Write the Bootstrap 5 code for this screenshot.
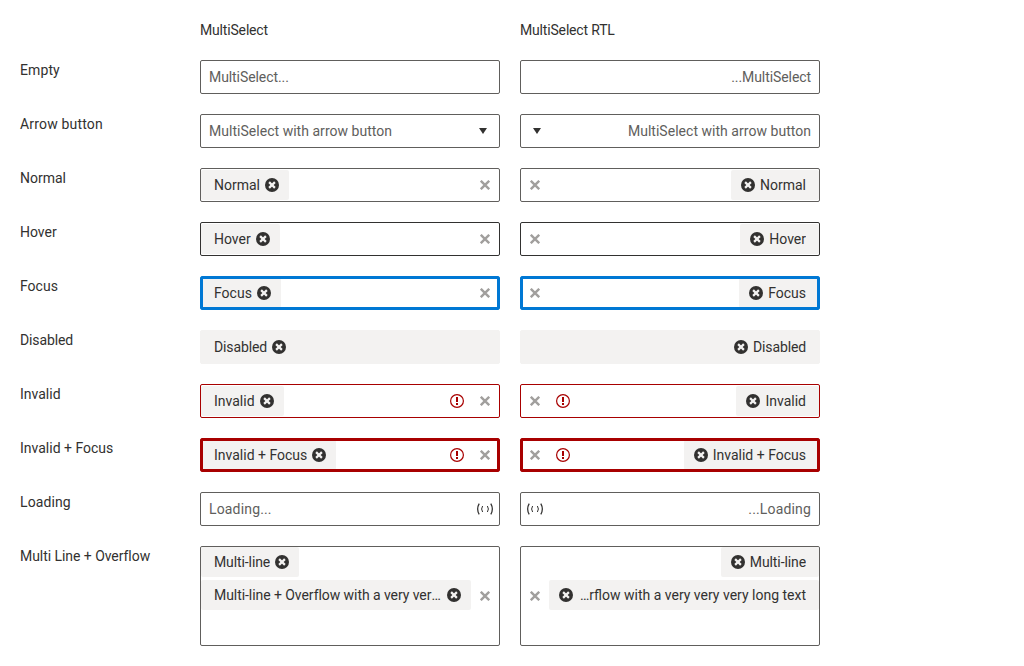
<!DOCTYPE html>
<html lang="en">
<head>
<meta charset="utf-8">
<meta name="viewport" content="width=device-width, initial-scale=1">
<title>MultiSelect</title>
<link href="https://cdn.jsdelivr.net/npm/bootstrap@5.3.0/dist/css/bootstrap.min.css" rel="stylesheet">
<style>
  body { font: 14px/20px Roboto, sans-serif; color: #323130; background: #fff; }
  .states { grid-template-columns: 160px 300px 300px; gap: 20px; padding: 20px; }
  .ms { height: 34px; border: 1px solid #605e5c; border-radius: 2px; background: #fff; }
  .ms.is-tall { height: 100px; }
  .ms.is-hover { border-color: #323130; }
  .ms.is-focus { border-color: #0078d4; }
  .ms.is-bad { border-color: #a80000; }
  .ms.is-off { border-color: #f3f2f1; background: #f3f2f1; }
  .ms.is-focus::after, .ms.is-ring::after { content: ""; position: absolute; inset: 0; border: 2px solid #0078d4; }
  .ms.is-ring::after { border-color: #a80000; }
  .hint { color: #605e5c; padding-inline: 8px; }
  .chips { gap: 3px; min-width: 0; }
  .is-tall .chips { align-self: flex-start; }
  .chip { height: 30px; max-width: 100%; background: #f3f2f1; border-radius: 2px; padding-inline: 13px 10px; gap: 5px; }
  .slot { width: 28px; }
  .slot-arrow { width: 32px; }
  svg { display: block; flex: none; }
</style>
</head>
<body>
<svg width="0" height="0" class="position-absolute" aria-hidden="true">
  <symbol id="remove" viewBox="0 0 14 14"><circle cx="7" cy="7" r="7" fill="#323130"/><path d="M4.1 4.1l5.8 5.8M9.9 4.1l-5.8 5.8" stroke="#f3f2f1" stroke-width="2.2"/></symbol>
  <symbol id="clear" viewBox="0 0 10 10"><path d="M.8.8l8.4 8.4M9.2.8L.8 9.2" stroke="#a19f9d" stroke-width="2.4"/></symbol>
  <symbol id="alert" viewBox="0 0 14 14"><circle cx="7" cy="7" r="6.4" fill="none" stroke="#a80000" stroke-width="1.2"/><path d="M6 3h2v5H6zM6 9h2v2H6z" fill="#a80000"/></symbol>
  <symbol id="arrow" viewBox="0 0 8 6"><path d="M0 0h8L4 6z" fill="#323130"/></symbol>
  <symbol id="busy" viewBox="0 0 18 12"><path d="M3.2.6Q.1 6 3.2 11.4M14.8.6Q17.9 6 14.8 11.4" fill="none" stroke="#323130" stroke-width="1.25"/><path d="M6.6 3Q4.6 6 6.6 9M11.4 3Q13.4 6 11.4 9" fill="none" stroke="#323130" stroke-width="1"/></symbol>
</svg>
<main class="states d-grid" id="states"></main>
<script src="https://cdn.jsdelivr.net/npm/bootstrap@5.3.0/dist/js/bootstrap.bundle.min.js"></script>
<script>
  const icon = (id, w, h) => `<svg width="${w}" height="${h}" aria-hidden="true"><use href="#${id}"/></svg>`;
  const icons = { clear: icon('clear', 10, 10), alert: icon('alert', 14, 14), arrow: icon('arrow', 8, 6), busy: icon('busy', 18, 12) };
  // letter spacing in px
  const tracking = {
    'MultiSelect': -.17, 'MultiSelect RTL': -.17, 'MultiSelect...': -.08, 'MultiSelect with arrow button': .03,
    'Empty': .1, 'Arrow button': .17, 'Disabled': -.12, 'Loading': .1, 'Loading...': .16,
    'Multi Line + Overflow': -.05, 'Multi-line': -.1
  };
  const spaced = (t, dir) => {
    const v = t.startsWith('Multi-line +') ? (dir === 'ltr' ? -.06 : 0) : tracking[t];
    return v ? ` style="letter-spacing:${v}px"` : '';
  };
  const chip = (text, dir) => `<div class="chip d-flex align-items-center"><span class="text-truncate"${spaced(text, dir)}>${text}</span>${icon('remove', 14, 14)}</div>`;
  // label, state classes, placeholder, chips, trailing icons
  const rows = [
    ['Empty', '', 'MultiSelect...', [], []],
    ['Arrow button', '', 'MultiSelect with arrow button', [], ['arrow']],
    ['Normal', '', '', ['Normal'], ['clear']],
    ['Hover', 'is-hover', '', ['Hover'], ['clear']],
    ['Focus', 'is-focus', '', ['Focus'], ['clear']],
    ['Disabled', 'is-off', '', ['Disabled'], []],
    ['Invalid', 'is-bad', '', ['Invalid'], ['alert', 'clear']],
    ['Invalid + Focus', 'is-bad is-ring', '', ['Invalid + Focus'], ['alert', 'clear']],
    ['Loading', '', 'Loading...', [], ['busy']],
    ['Multi Line + Overflow', 'is-tall', '', ['Multi-line', 'Multi-line + Overflow with a very very very long text'], ['clear']]
  ];
  const control = ([, state, hint, chips, tail], dir) => {
    const slots = tail.map(t => `<div class="slot slot-${t} d-flex justify-content-center flex-shrink-0">${icons[t]}</div>`).join('');
    const body = hint ? `<div class="hint flex-grow-1"${spaced(hint)}>${hint}</div>`
      : `<div class="chips d-flex flex-column align-items-start flex-grow-1">${chips.map(c => chip(c, dir)).join('')}</div>`;
    return `<div class="ms ${state} d-flex align-items-center position-relative" dir="${dir}">${body}${slots}</div>`;
  };
  const label = t => `<div${spaced(t)}>${t}</div>`;
  document.getElementById('states').innerHTML = '<div></div>' + label('MultiSelect') + label('MultiSelect RTL') +
    rows.map(r => label(r[0]) + control(r, 'ltr') + control(r, 'rtl')).join('');
</script>
</body>
</html>
